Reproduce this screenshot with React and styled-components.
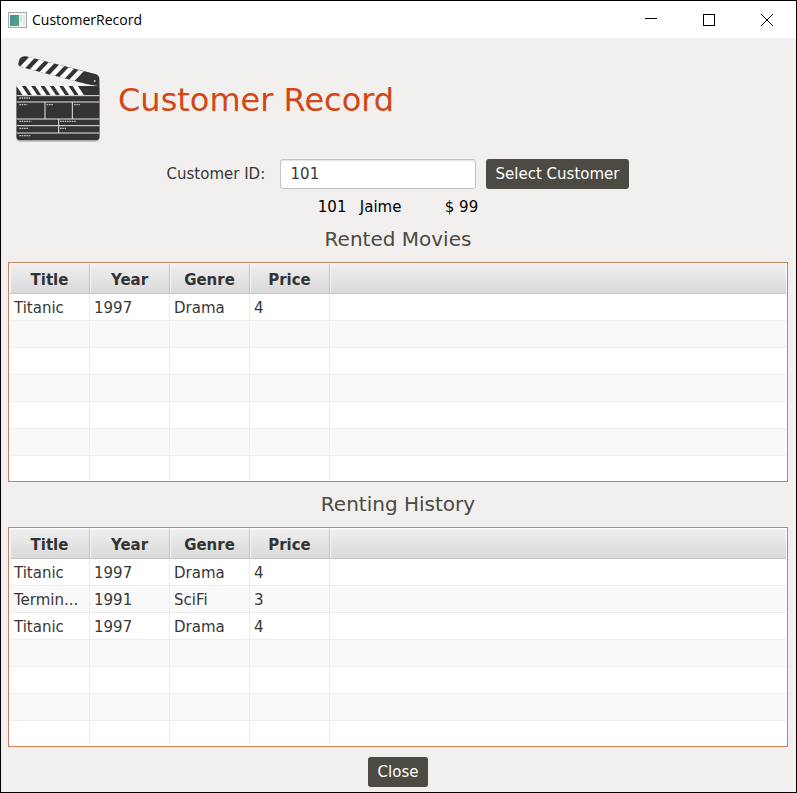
import React from "react";
import styled, { createGlobalStyle } from "styled-components";

const GlobalStyle = createGlobalStyle`
  *, *::before, *::after { box-sizing: border-box; }
  body {
    margin: 0;
    font-family: "DejaVu Sans", Verdana, sans-serif;
    font-size: 15px;
    line-height: 20px;
    color: #383838;
  }
`;

const Window = styled.div`
  display: flex;
  flex-direction: column;
  min-height: 100vh;
  border: 1px solid #000;
  background: #f1f0ee;
`;

const TitleBar = styled.header`
  display: flex;
  align-items: center;
  height: 37px;
  padding-left: 7px;
  background: #fff;
  color: #000;
  font-family: "Open Sans", sans-serif;
  font-size: 14px;
`;

const WindowTitle = styled.span`
  flex: 1;
  margin-left: 5px;
`;

const CaptionButton = styled.button`
  display: flex;
  align-items: center;
  justify-content: center;
  width: 58px;
  height: 37px;
  padding: 0;
  border: 0;
  background: transparent;
  color: #000;
`;

const Content = styled.main`
  display: flex;
  flex-direction: column;
  flex: 1;
  padding: 16px 8px 5px 7px;
`;

const Banner = styled.div`
  display: flex;
  align-items: center;
  gap: 16px;
  padding-left: 6px;
`;

const PageTitle = styled.h1`
  margin: 2px 0 0;
  color: #d34615;
  font-size: 32px;
  font-weight: 400;
  line-height: 40px;
`;

const SearchForm = styled.form`
  display: flex;
  align-items: center;
  justify-content: center;
  gap: 10px;
  margin-top: 15px;
`;

const FieldLabel = styled.label`
  width: 103px;
  white-space: nowrap;
`;

const TextField = styled.input`
  width: 196px;
  height: 30px;
  padding: 0 10px;
  border: 1px solid #c4c3c1;
  border-radius: 3px;
  background: #fff;
  box-shadow: inset 0 1px 1px #e4e4e4;
  color: #383838;
  font: inherit;
`;

const Button = styled.button`
  height: 30px;
  padding: 0 10px;
  border: 0;
  border-radius: 3px;
  background: #4c4a42;
  color: #fff;
  font: inherit;
  white-space: nowrap;
`;

const Summary = styled.div`
  display: grid;
  grid-template-columns: 42px 85px auto;
  justify-content: center;
  margin-top: 8px;
  color: #000;
`;

const SectionTitle = styled.h2`
  margin: 10px 0;
  color: #4c4a42;
  font-size: 20px;
  font-weight: 400;
  line-height: 25px;
  text-align: center;
`;

const TableFrame = styled.div`
  padding: 1px;
  border: 1px solid #cf7f5f;
  background: #fff;
`;

const Table = styled.table`
  width: 100%;
  table-layout: fixed;
  border-collapse: separate;
  border-spacing: 0;
`;

const Column = styled.col`
  width: ${(p) => (p.$filler ? "auto" : "80px")};
`;

const HeadRow = styled.tr`
  background: linear-gradient(#efefef, #d9d9d9);
`;

const HeadCell = styled.th`
  height: 30px;
  padding: 2px 0 0;
  border-right: ${(p) => (p.$filler ? "0" : "1px solid #c4c4c4")};
  border-bottom: 1px solid #c4c4c4;
  box-shadow: inset 1px 1px 0 #f6f6f6;
  color: #333;
`;

const BodyRow = styled.tr`
  height: 27px;
  background: #fff;
  &:nth-child(even) { background: #f9f9f9; }
  &:last-child { height: 24px; }
`;

const Cell = styled.td`
  overflow: hidden;
  padding: 2px 4px 0;
  border-right: ${(p) => (p.$filler ? "0" : "1px solid #ededed")};
  border-bottom: 1px solid #ededed;
  text-overflow: ellipsis;
  white-space: nowrap;
  ${BodyRow}:last-child & { border-bottom: 0; }
`;

const Footer = styled.footer`
  display: flex;
  justify-content: center;
  margin-top: 10px;
`;

function AppIcon() {
  return (
    <svg width="19" height="16" viewBox="0 0 19 16" aria-hidden="true">
      <defs>
        <linearGradient id="screen" x1="0" y1="0" x2="1" y2="1">
          <stop offset="0" stopColor="#4a86a8" />
          <stop offset="1" stopColor="#4fae6c" />
        </linearGradient>
      </defs>
      <rect x="0.5" y="0.5" width="18" height="15" fill="#f4f6f7" stroke="#a4acb2" />
      <rect x="2" y="3" width="9" height="11" fill="url(#screen)" />
      <rect x="12" y="3" width="2" height="7" fill="#d5dadd" />
      <rect x="15" y="3" width="2" height="11" fill="#e2e6e8" />
    </svg>
  );
}

function Clapperboard() {
  const armStripes = [88, 118, 147, 177, 206, 235];
  const bodyStripes = [49, 77, 105, 133, 161, 189, 217];
  return (
    <svg width="88" height="90" viewBox="42 162 264 270" aria-hidden="true">
      <defs>
        <clipPath id="arm">
          <path d="M55 190Q58 166 78 169L286 222Q299 226 299 240V259L262 253L60 200Q54 197 55 190Z" />
        </clipPath>
        <clipPath id="body">
          <path d="M49 258H299V408Q299 421 286 421H62Q49 421 49 408Z" />
        </clipPath>
      </defs>
      <path d="M48 265H300V410Q299 425 284 425H64Q48 425 48 410Z" fill="#b4b3b1" />
      <g clipPath="url(#arm)">
        <rect x="49" y="160" width="255" height="105" fill="#333" />
        {armStripes.map((x, i) => {
          const y = 170 + i * 8;
          return <path key={x} d={`M${x} ${y}l16 4l-34 36l-16 -4Z`} fill="#fff" />;
        })}
      </g>
      <g clipPath="url(#body)">
        <rect x="48" y="257" width="252" height="166" fill="#333" />
        {bodyStripes.map((x) => (
          <path key={x} d={`M${x} 257h16l19 29h-16Z`} fill="#fff" />
        ))}
        <g stroke="#e8e8e8" strokeWidth="3">
          <path d="M48 287H300M48 306H300M48 357H300M48 377H300M48 399H300M135 306V357M217 306V357M176 357V399" fill="none" />
        </g>
        <g stroke="#bdbdbd" strokeWidth="4" strokeDasharray="5 2" fill="none">
          <path d="M58 294H90M58 314H82M140 314H160M222 314H240M58 364H94M180 364H227M58 385H84M180 385H198M58 407H91" />
        </g>
      </g>
      <circle cx="284" cy="243" r="3" fill="#c8c8c8" />
    </svg>
  );
}

function MovieTable({ label, movies, rowCount }) {
  const rows = Array.from({ length: rowCount }, (_, i) => movies[i] || ["", "", "", ""]);
  return (
    <TableFrame>
      <Table aria-label={label}>
        <colgroup>
          <Column /><Column /><Column /><Column /><Column $filler />
        </colgroup>
        <thead>
          <HeadRow>
            {["Title", "Year", "Genre", "Price"].map((name) => (
              <HeadCell key={name} scope="col">{name}</HeadCell>
            ))}
            <HeadCell $filler />
          </HeadRow>
        </thead>
        <tbody>
          {rows.map((row, i) => (
            <BodyRow key={i}>
              {row.map((value, c) => <Cell key={c}>{value}</Cell>)}
              <Cell $filler />
            </BodyRow>
          ))}
        </tbody>
      </Table>
    </TableFrame>
  );
}

const rented = [["Titanic", "1997", "Drama", "4"]];
const history = [
  ["Titanic", "1997", "Drama", "4"],
  ["Termin...", "1991", "SciFi", "3"],
  ["Titanic", "1997", "Drama", "4"],
];

export default function App() {
  return (
    <Window>
      <GlobalStyle />
      <TitleBar>
        <AppIcon />
        <WindowTitle>CustomerRecord</WindowTitle>
        <CaptionButton aria-label="Minimize">
          <svg width="12" height="12"><path d="M0 4.5H12" stroke="currentColor" /></svg>
        </CaptionButton>
        <CaptionButton aria-label="Maximize">
          <svg width="12" height="12"><rect x="0.5" y="0.5" width="11" height="11" fill="none" stroke="currentColor" /></svg>
        </CaptionButton>
        <CaptionButton aria-label="Close window">
          <svg width="12" height="12"><path d="M0 0L12 12M12 0L0 12" stroke="currentColor" /></svg>
        </CaptionButton>
      </TitleBar>
      <Content>
        <Banner>
          <Clapperboard />
          <PageTitle>Customer Record</PageTitle>
        </Banner>
        <SearchForm onSubmit={(e) => e.preventDefault()}>
          <FieldLabel htmlFor="customer-id">Customer ID:</FieldLabel>
          <TextField id="customer-id" defaultValue="101" />
          <Button type="submit">Select Customer</Button>
        </SearchForm>
        <Summary>
          <span>101</span>
          <span>Jaime</span>
          <span>$ 99</span>
        </Summary>
        <SectionTitle>Rented Movies</SectionTitle>
        <MovieTable label="Rented Movies" movies={rented} rowCount={7} />
        <SectionTitle>Renting History</SectionTitle>
        <MovieTable label="Renting History" movies={history} rowCount={7} />
        <Footer>
          <Button type="button">Close</Button>
        </Footer>
      </Content>
    </Window>
  );
}
